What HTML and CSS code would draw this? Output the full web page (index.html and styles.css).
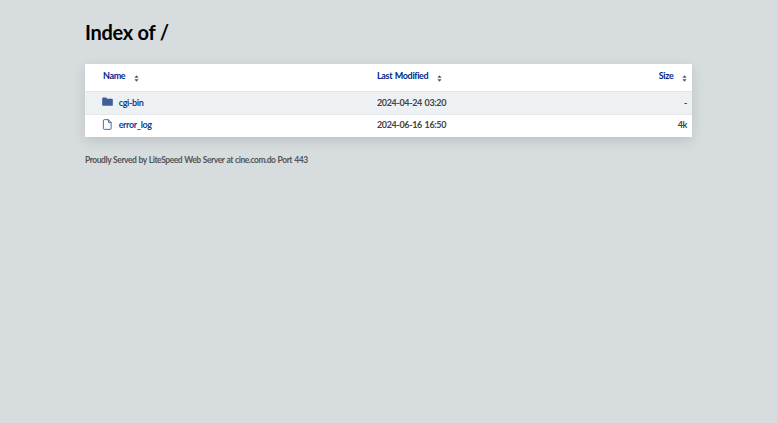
FILE: index.html
```html
<!DOCTYPE html>
<html lang="en">
<head>
    <meta charset="UTF-8">
    <meta name="viewport" content="width=device-width, initial-scale=1.0">
    <title>Index of /</title>
    <link rel="stylesheet" href="styles.css">
</head>
<body>

<div class="container">
    <h1>Index of /</h1>

    <table class="listing">
        <thead>
            <tr>
                <th class="col-name"><a href="#">Name</a>
                    <svg class="sort" viewBox="0 0 6 8"><path d="M3 0 L5.5 3 H0.5 Z M3 8 L0.5 5 H5.5 Z"/></svg>
                </th>
                <th class="col-date"><a href="#">Last Modified</a>
                    <svg class="sort" viewBox="0 0 6 8"><path d="M3 0 L5.5 3 H0.5 Z M3 8 L0.5 5 H5.5 Z"/></svg>
                </th>
                <th class="col-size"><a href="#">Size</a>
                    <svg class="sort" viewBox="0 0 6 8"><path d="M3 0 L5.5 3 H0.5 Z M3 8 L0.5 5 H5.5 Z"/></svg>
                </th>
            </tr>
        </thead>
        <tbody>
            <tr class="shaded">
                <td class="col-name">
                    <svg class="icon" viewBox="0 0 12 12"><path class="fill" d="M1.2 0.5 H4.6 L5.8 2 H10.8 A1 1 0 0 1 11.8 3 V8.6 A1 1 0 0 1 10.8 9.6 H1.2 A1 1 0 0 1 0.2 8.6 V1.5 A1 1 0 0 1 1.2 0.5 Z"/></svg>
                    <a href="#">cgi-bin</a>
                </td>
                <td class="col-date">2024-04-24 03:20</td>
                <td class="col-size">-</td>
            </tr>
            <tr>
                <td class="col-name">
                    <svg class="icon" viewBox="0 0 12 12"><path class="line" d="M2.6 0.7 H7 L10 3.7 V10.2 A1.1 1.1 0 0 1 8.9 11.3 H2.6 A1.1 1.1 0 0 1 1.5 10.2 V1.8 A1.1 1.1 0 0 1 2.6 0.7 Z M7 0.7 V3.7 H10"/></svg>
                    <a href="#">error_log</a>
                </td>
                <td class="col-date">2024-06-16 16:50</td>
                <td class="col-size">4k</td>
            </tr>
        </tbody>
    </table>

    <address>Proudly Served by LiteSpeed Web Server at cine.com.do Port 443</address>
</div>

</body>
</html>
```

FILE: styles.css
```css
body {
    font-family: Lato, "Open Sans", sans-serif;
    background: #d7dcde;
    margin: 0;
    color: #444;
}
.container {
    width: 607px;
    margin: 0 0 0 85px;
}
h1 {
    margin: 0;
    padding-top: 19px;
    height: 64px;
    box-sizing: border-box;
    font-size: 20px;
    line-height: 26px;
    letter-spacing: -0.27px;
    font-weight: 700;
    color: #000;
}
.listing {
    width: 100%;
    border-collapse: collapse;
    table-layout: fixed;
    background: #fff;
    box-shadow: 0 4px 12px rgba(0, 0, 0, 0.12);
    font-size: 9px;
    letter-spacing: -0.35px;
    word-spacing: 0.8px;
}
th {
    height: 27px;
    padding: 0 0 3px;
    box-sizing: border-box;
    font-weight: 700;
    text-align: left;
}
td {
    height: 23px;
    padding: 0 0 1px;
    box-sizing: border-box;
    font-weight: 700;
    border-top: 1px solid #e3e7ea;
}
tr:last-child td {
    padding-bottom: 2px;
}
a {
    color: #0f3f9a;
    text-decoration: none;
}
th a {
    color: #00288a;
}
.shaded {
    background: #eef1f4;
}
.col-name {
    width: 292px;
    padding-left: 18px;
    white-space: nowrap;
}
.col-date {
    width: 235px;
}
.col-size {
    text-align: right;
    padding-right: 5px;
}
.sort {
    width: 5px;
    height: 7px;
    margin-left: 6px;
    fill: #555;
    vertical-align: -3px;
}
.icon {
    width: 11px;
    height: 11px;
    margin-right: 3px;
    margin-left: -1px;
    vertical-align: -2px;
}
.fill {
    fill: #3f5d96;
}
.line {
    fill: none;
    stroke: #3f5d96;
    stroke-width: 1;
}
address {
    margin-top: 17px;
    font-size: 8.5px;
    line-height: 12px;
    letter-spacing: -0.45px;
    word-spacing: 0.5px;
    font-style: normal;
    font-weight: 700;
    color: #555;
}
```
